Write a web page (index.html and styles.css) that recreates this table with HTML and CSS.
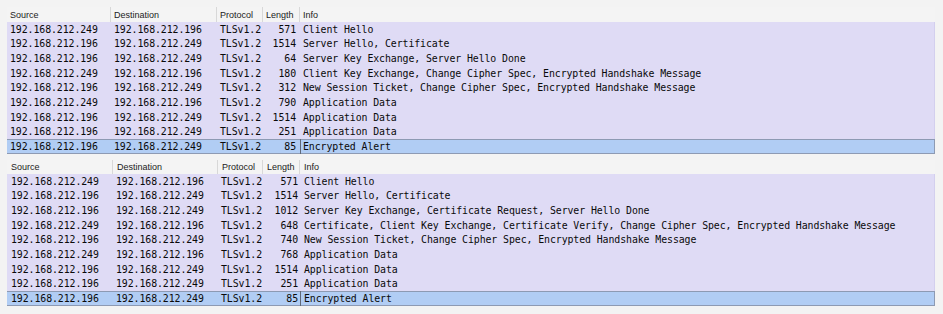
FILE: index.html
```html
<!DOCTYPE html>
<html>
<head>
<meta charset="utf-8">
<link rel="stylesheet" href="styles.css">
</head>
<body>
<div class="panel p1">
  <div class="hdr">
    <div class="h">Source</div><div class="h">Destination</div><div class="h">Protocol</div><div class="h">Length</div><div class="h">Info</div>
  </div>
  <div class="row"><span>192.168.212.249</span><span>192.168.212.196</span><span>TLSv1.2</span><span class="len">571</span><span class="info">Client Hello</span></div>
  <div class="row"><span>192.168.212.196</span><span>192.168.212.249</span><span>TLSv1.2</span><span class="len">1514</span><span class="info">Server Hello, Certificate</span></div>
  <div class="row"><span>192.168.212.196</span><span>192.168.212.249</span><span>TLSv1.2</span><span class="len">64</span><span class="info">Server Key Exchange, Server Hello Done</span></div>
  <div class="row"><span>192.168.212.249</span><span>192.168.212.196</span><span>TLSv1.2</span><span class="len">180</span><span class="info">Client Key Exchange, Change Cipher Spec, Encrypted Handshake Message</span></div>
  <div class="row"><span>192.168.212.196</span><span>192.168.212.249</span><span>TLSv1.2</span><span class="len">312</span><span class="info">New Session Ticket, Change Cipher Spec, Encrypted Handshake Message</span></div>
  <div class="row"><span>192.168.212.249</span><span>192.168.212.196</span><span>TLSv1.2</span><span class="len">790</span><span class="info">Application Data</span></div>
  <div class="row"><span>192.168.212.196</span><span>192.168.212.249</span><span>TLSv1.2</span><span class="len">1514</span><span class="info">Application Data</span></div>
  <div class="row"><span>192.168.212.196</span><span>192.168.212.249</span><span>TLSv1.2</span><span class="len">251</span><span class="info">Application Data</span></div>
  <div class="row sel"><span>192.168.212.196</span><span>192.168.212.249</span><span>TLSv1.2</span><span class="len">85</span><span class="info focus box">Encrypted Alert</span></div>
</div>
<div class="panel p2">
  <div class="hdr">
    <div class="h">Source</div><div class="h">Destination</div><div class="h">Protocol</div><div class="h">Length</div><div class="h">Info</div>
  </div>
  <div class="row"><span>192.168.212.249</span><span>192.168.212.196</span><span>TLSv1.2</span><span class="len">571</span><span class="info">Client Hello</span></div>
  <div class="row"><span>192.168.212.196</span><span>192.168.212.249</span><span>TLSv1.2</span><span class="len">1514</span><span class="info">Server Hello, Certificate</span></div>
  <div class="row"><span>192.168.212.196</span><span>192.168.212.249</span><span>TLSv1.2</span><span class="len">1012</span><span class="info">Server Key Exchange, Certificate Request, Server Hello Done</span></div>
  <div class="row"><span>192.168.212.249</span><span>192.168.212.196</span><span>TLSv1.2</span><span class="len">648</span><span class="info">Certificate, Client Key Exchange, Certificate Verify, Change Cipher Spec, Encrypted Handshake Message</span></div>
  <div class="row"><span>192.168.212.196</span><span>192.168.212.249</span><span>TLSv1.2</span><span class="len">740</span><span class="info">New Session Ticket, Change Cipher Spec, Encrypted Handshake Message</span></div>
  <div class="row"><span>192.168.212.249</span><span>192.168.212.196</span><span>TLSv1.2</span><span class="len">768</span><span class="info">Application Data</span></div>
  <div class="row"><span>192.168.212.196</span><span>192.168.212.249</span><span>TLSv1.2</span><span class="len">1514</span><span class="info">Application Data</span></div>
  <div class="row"><span>192.168.212.196</span><span>192.168.212.249</span><span>TLSv1.2</span><span class="len">251</span><span class="info">Application Data</span></div>
  <div class="row sel"><span>192.168.212.196</span><span>192.168.212.249</span><span>TLSv1.2</span><span class="len">85</span><span class="info focus">Encrypted Alert</span></div>
</div>
</body>
</html>
```
FILE: styles.css
```css
html, body {
  margin: 0;
  padding: 0;
  background: #f3f3f3;
}
body {
  padding-top: 7px;
  width: 943px;
  height: 314px;
  overflow: hidden;
}
.panel {
  width: 928px;
  margin-left: 7px;
}
.p1 { --cols: 104px 106px 46px 37px 1fr; }
.p2 { --cols: 106px 105px 45px 37px 1fr; margin-top: 6px; }
.hdr {
  display: grid;
  grid-template-columns: var(--cols);
  height: 15px;
  background: #f4f4f4;
  font-family: "Liberation Sans", Arial, sans-serif;
  font-size: 9px;
  color: #222;
}
.p2 .hdr { height: 14px; }
.h {
  display: flex;
  align-items: center;
  padding-left: 3px;
  border-right: 1px solid #d8d8d8;
}
.p2 .h { padding-left: 4px; }
.h:last-child { border-right: none; }
.row {
  display: grid;
  grid-template-columns: var(--cols);
  height: 14.667px;
  background: #dfdbf5;
  font-family: "DejaVu Sans Mono", "Liberation Mono", monospace;
  font-size: 9.9px;
  letter-spacing: -0.09px;
  color: #0a0a0a;
  box-shadow: inset -1px 0 #d3cfee;
}
.row span {
  display: flex;
  align-items: center;
  padding-left: 3px;
  white-space: nowrap;
  overflow: hidden;
}
.p2 .row span { padding-left: 4px; }
.p2 .row span:nth-child(2), .p2 .row span:nth-child(3) { padding-left: 3px; }
.row span.len {
  justify-content: flex-end;
  padding-left: 0;
  padding-right: 4px;
}
.p2 .row span.len { padding-right: 2px; padding-left: 0; }
.row span.info { padding-left: 3px; }
.p2 .row span.info { padding-left: 4px; }
.row.sel {
  background: #b1cdf4;
  box-shadow: inset 0 1px #8d9ab3, inset 0 -1px #8d9ab3, inset -1px 0 #8d9ab3;
}
.row span.focus {
  border-left: 1px solid #5f6878;
  padding-left: 2px;
}
.p2 .row span.focus { padding-left: 3px; }
```
